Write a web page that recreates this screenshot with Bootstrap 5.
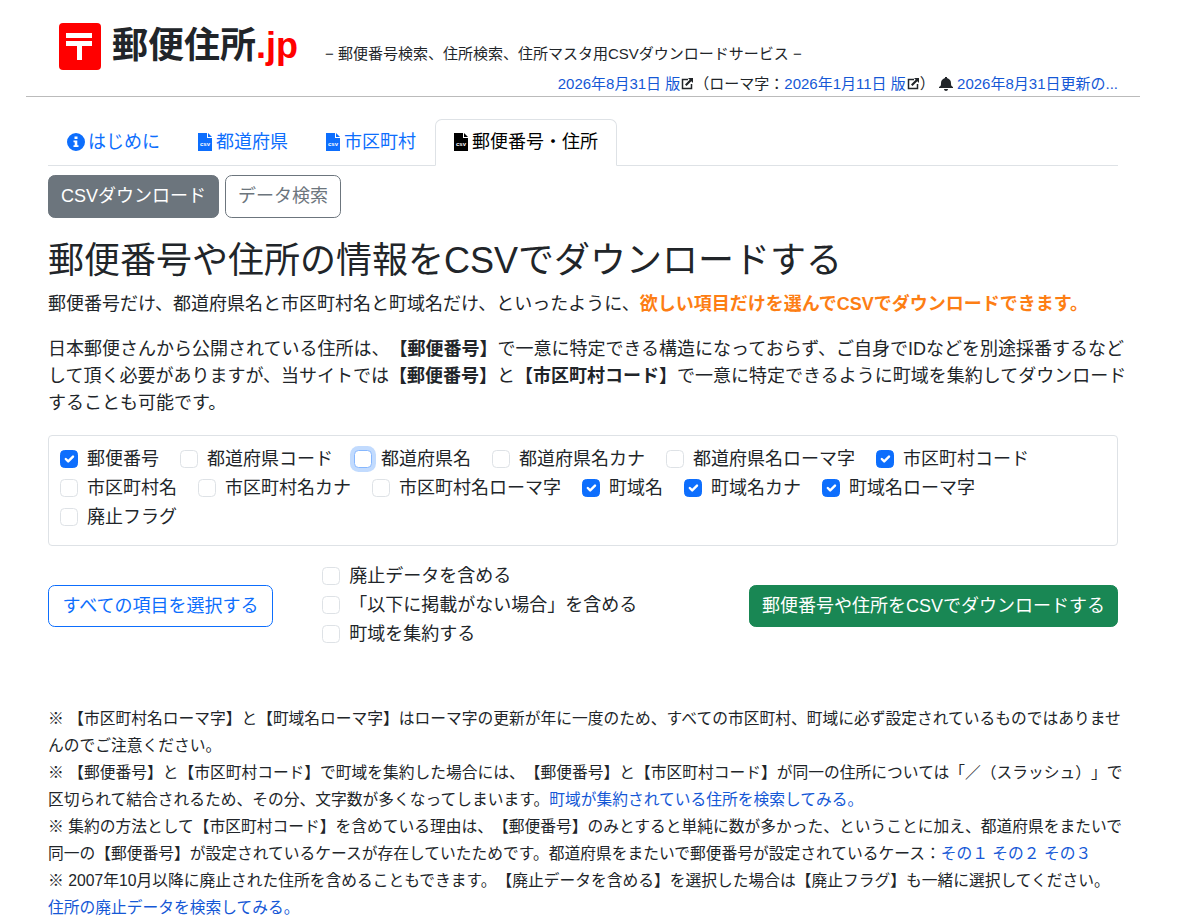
<!DOCTYPE html>
<html lang="ja">
<head>
<meta charset="utf-8">
<meta name="viewport" content="width=device-width, initial-scale=1">
<title>郵便住所.jp</title>
<link href="https://cdn.jsdelivr.net/npm/bootstrap@5.3.0/dist/css/bootstrap.min.css" rel="stylesheet">
<style>
  :root { font-size: 18px; }
  body {
    font-family: "Liberation Sans", "Noto Sans CJK JP", sans-serif;
    font-size: 18px; line-height: 27px;
    padding: 21px 60px 0 26px;
    text-spacing-trim: space-all;
  }
  a { color: #1558d6; text-decoration: none; }
  .site-head { border-bottom: 1px solid #bbb; padding: 0 22px 0 33px; }
  .site-name { font-size: 36px; line-height: 50px; font-weight: 700; color: #212529; gap: 11px; }
  .site-name em { color: #f00; font-style: normal; }
  .tagline { font-size: 15px; margin-left: 27px; padding-top: 14px; }
  .updates { font-size: 15px; line-height: 25px; }
  .page-main { padding: 22px 22px 0; }
  .nav-tabs .nav-link { line-height: 27px; color: #0d6efd; }
  .nav-tabs .nav-link.active { color: #000; }
  .glyph { width: 18px; height: 18px; vertical-align: -3px; fill: currentColor; }
  .glyph-info { margin-right: -2px; }
  .glyph-file { width: 14px; margin-right: 4px; }
  .glyph-sm { width: 14px; height: 14px; vertical-align: -2px; fill: #212529; }
  .modes { gap: 6px; margin: 9px 0 21px; }
  .modes .btn, .actions .btn-success { padding-left: 12px; padding-right: 12px; }
  h1 { font-size: 36px; line-height: 44px; font-weight: 400; margin-bottom: 8px; }
  .prose { margin-right: -14px; margin-bottom: 18px; }
  .accent { color: #fd7e14; }
  .fields { border: 1px solid #dee2e6; border-radius: 4px; padding: 10px 11px 12px; }
  .form-check-inline { margin-right: 16px; vertical-align: top; }
  .form-check { min-height: 27px; margin-bottom: 2px; }
  .field-active { border-color: #86b7fe; box-shadow: 0 0 0 4px rgba(13, 110, 253, .25); }
  .actions { margin-top: 17px; margin-bottom: 55px; }
</style>
</head>
<body>
<svg class="d-none" aria-hidden="true">
  <symbol id="file" viewBox="0 0 14 18"><path d="M0 0h9v5h5v13H0zM10 0l4 4h-4z"/><text x="7" y="13" text-anchor="middle" font-size="6" font-weight="700" fill="#fff">csv</text></symbol>
  <symbol id="outside" viewBox="0 0 14 14"><path d="M8 2.500H2.500v9h9V7" fill="none" stroke="#212529" stroke-width="1.500"/><path d="M8 1h5v5l-1.700-1.700L6.500 9 5 7.500l4.700-4.800z"/></symbol>
  <symbol id="bell" viewBox="0 0 14 14"><path d="M6 0h2v1c2 1 4 2 4 5 0 2 0 3 2 4v1H0v-1c2-1 2-2 2-4 0-3 2-4 4-5zM5 12h4c0 1-1 2-2 2s-2-1-2-2z"/></symbol>
  <symbol id="info" viewBox="0 0 18 18"><path fill-rule="evenodd" d="M9 0a9 9 0 1 1 0 18A9 9 0 0 1 9 0zM7.500 3.500v2.500h3V3.500zM6.500 7.500v1.700h1.200v3H6.500V14h5v-1.800h-1.200V7.500z"/></symbol>
</svg>

<header class="site-head">
  <div class="d-flex align-items-center">
    <a href="#" class="site-name d-flex align-items-center">
      <svg width="42" height="47" viewBox="0 0 42 47" aria-hidden="true"><rect width="42" height="47" rx="4" fill="#f00"/><path fill="#fff" d="M7 10h26v5H7zM7 18h26v5H23v14h-5V23H7z"/></svg>
      <span>郵便住所<em>.jp</em></span>
    </a>
    <div class="tagline text-nowrap">− 郵便番号検索、住所検索、住所マスタ用CSVダウンロードサービス −</div>
  </div>
  <div class="updates text-end text-nowrap"><a href="#">2026年8月31日 版</a><svg class="glyph-sm"><use href="#outside"/></svg>（ローマ字：<a href="#">2026年1月11日 版</a><svg class="glyph-sm"><use href="#outside"/></svg>） <svg class="glyph-sm"><use href="#bell"/></svg> <a href="#">2026年8月31日更新の...</a></div>
</header>

<main class="page-main">
  <ul class="nav nav-tabs">
    <li class="nav-item"><a class="nav-link" href="#"><svg class="glyph glyph-info"><use href="#info"/></svg> はじめに</a></li>
    <li class="nav-item"><a class="nav-link" href="#"><svg class="glyph glyph-file"><use href="#file"/></svg>都道府県</a></li>
    <li class="nav-item"><a class="nav-link" href="#"><svg class="glyph glyph-file"><use href="#file"/></svg>市区町村</a></li>
    <li class="nav-item"><a class="nav-link active" aria-current="page" href="#"><svg class="glyph glyph-file"><use href="#file"/></svg>郵便番号・住所</a></li>
  </ul>

  <div class="modes d-flex">
    <button type="button" class="btn btn-secondary">CSVダウンロード</button>
    <button type="button" class="btn btn-outline-secondary">データ検索</button>
  </div>

  <h1>郵便番号や住所の情報をCSVでダウンロードする</h1>
  <p class="prose">郵便番号だけ、都道府県名と市区町村名と町域名だけ、といったように、<strong class="accent">欲しい項目だけを選んでCSVでダウンロードできます。</strong></p>
  <p class="prose">日本郵便さんから公開されている住所は、<strong>【郵便番号】</strong>で一意に特定できる構造になっておらず、ご自身でIDなどを別途採番するなどして頂く必要がありますが、当サイトでは<strong>【郵便番号】</strong>と<strong>【市区町村コード】</strong>で一意に特定できるように町域を集約してダウンロードすることも可能です。</p>

  <form>
    <div class="fields">
      <div class="form-check form-check-inline"><input class="form-check-input" type="checkbox" id="f1" checked><label class="form-check-label" for="f1">郵便番号</label></div>
      <div class="form-check form-check-inline"><input class="form-check-input" type="checkbox" id="f2"><label class="form-check-label" for="f2">都道府県コード</label></div>
      <div class="form-check form-check-inline"><input class="form-check-input field-active" type="checkbox" id="f3"><label class="form-check-label" for="f3">都道府県名</label></div>
      <div class="form-check form-check-inline"><input class="form-check-input" type="checkbox" id="f4"><label class="form-check-label" for="f4">都道府県名カナ</label></div>
      <div class="form-check form-check-inline"><input class="form-check-input" type="checkbox" id="f5"><label class="form-check-label" for="f5">都道府県名ローマ字</label></div>
      <div class="form-check form-check-inline"><input class="form-check-input" type="checkbox" id="f6" checked><label class="form-check-label" for="f6">市区町村コード</label></div>
      <div class="form-check form-check-inline"><input class="form-check-input" type="checkbox" id="f7"><label class="form-check-label" for="f7">市区町村名</label></div>
      <div class="form-check form-check-inline"><input class="form-check-input" type="checkbox" id="f8"><label class="form-check-label" for="f8">市区町村名カナ</label></div>
      <div class="form-check form-check-inline"><input class="form-check-input" type="checkbox" id="f9"><label class="form-check-label" for="f9">市区町村名ローマ字</label></div>
      <div class="form-check form-check-inline"><input class="form-check-input" type="checkbox" id="f10" checked><label class="form-check-label" for="f10">町域名</label></div>
      <div class="form-check form-check-inline"><input class="form-check-input" type="checkbox" id="f11" checked><label class="form-check-label" for="f11">町域名カナ</label></div>
      <div class="form-check form-check-inline"><input class="form-check-input" type="checkbox" id="f12" checked><label class="form-check-label" for="f12">町域名ローマ字</label></div>
      <div class="form-check form-check-inline"><input class="form-check-input" type="checkbox" id="f13"><label class="form-check-label" for="f13">廃止フラグ</label></div>
    </div>

    <div class="actions row align-items-center">
      <div class="col-3"><button type="button" class="btn btn-outline-primary text-nowrap">すべての項目を選択する</button></div>
      <div class="col-auto">
        <div class="form-check"><input class="form-check-input" type="checkbox" id="o1"><label class="form-check-label" for="o1">廃止データを含める</label></div>
        <div class="form-check"><input class="form-check-input" type="checkbox" id="o2"><label class="form-check-label" for="o2">「以下に掲載がない場合」を含める</label></div>
        <div class="form-check"><input class="form-check-input" type="checkbox" id="o3"><label class="form-check-label" for="o3">町域を集約する</label></div>
      </div>
      <div class="col text-end"><button type="submit" class="btn btn-success text-nowrap">郵便番号や住所をCSVでダウンロードする</button></div>
    </div>
  </form>

  <div class="prose small mb-0">
    ※ 【市区町村名ローマ字】と【町域名ローマ字】はローマ字の更新が年に一度のため、すべての市区町村、町域に必ず設定されているものではありませんのでご注意ください。<br>
    ※ 【郵便番号】と【市区町村コード】で町域を集約した場合には、【郵便番号】と【市区町村コード】が同一の住所については「／（スラッシュ）」で区切られて結合されるため、その分、文字数が多くなってしまいます。<a href="#">町域が集約されている住所を検索してみる。</a><br>
    ※ 集約の方法として【市区町村コード】を含めている理由は、【郵便番号】のみとすると単純に数が多かった、ということに加え、都道府県をまたいで同一の【郵便番号】が設定されているケースが存在していたためです。都道府県をまたいで郵便番号が設定されているケース：<a href="#">その１</a> <a href="#">その２</a> <a href="#">その３</a><br>
    ※ 2007年10月以降に廃止された住所を含めることもできます。【廃止データを含める】を選択した場合は【廃止フラグ】も一緒に選択してください。<br>
    <a href="#">住所の廃止データを検索してみる。</a>
  </div>
</main>
<script src="https://cdn.jsdelivr.net/npm/bootstrap@5.3.0/dist/js/bootstrap.bundle.min.js"></script>
</body>
</html>
